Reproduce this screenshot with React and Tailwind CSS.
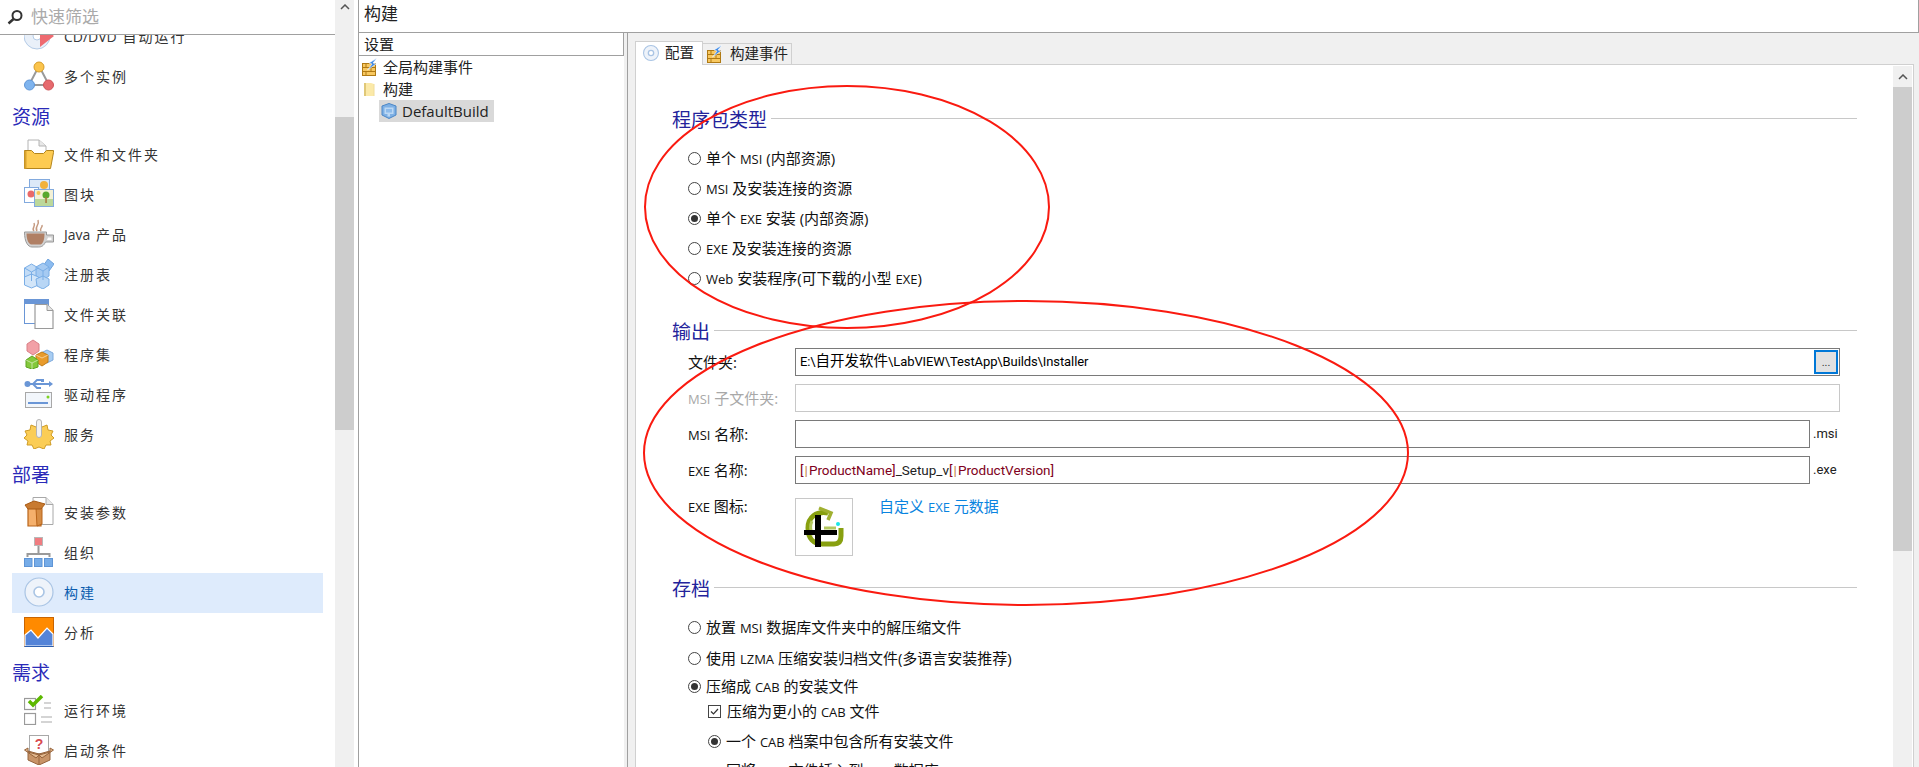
const font = { fontFamily: '"Open Sans","Noto Sans CJK SC",sans-serif' }

const Cd = ({ size = 30 }) => (
  <svg width={size} height={size} viewBox="0 0 30 30">
    <circle cx="15" cy="15" r="14" fill="#eef3fa" stroke="#a9c4e4" strokeWidth={size < 20 ? 2 : 1.2} />
    <circle cx="15" cy="15" r="5" fill="#fff" stroke="#a9c4e4" strokeWidth={size < 20 ? 2.500 : 1.6} />
  </svg>
)

const Bricks = () => (
  <svg width="16" height="18" viewBox="0 0 16 18" className="shrink-0">
    <rect x="0.500" y="5.500" width="13" height="12" fill="#f8c860" stroke="#b07a14" />
    <path d="M0 9.500h14M0 13.500h14M4 5v4.500M9 9.500v4M4 13.500v4M10 5v4.500" stroke="#b07a14" strokeWidth="1" />
    <path d="M15 0L7 5 10 6 5.500 12 14 6 11 5Z" fill="#3f8ae6" stroke="#fff" strokeWidth="0.600" />
  </svg>
)

const Folder = () => (
  <svg width="16" height="16" viewBox="0 0 16 16" className="shrink-0">
    <path d="M2 2h7l3 1v12H2z" fill="#fbe9a8" />
    <path d="M2 2h2v13H2z" fill="#e0c878" />
    <path d="M12 3v12" stroke="#efdc9c" />
  </svg>
)

const BlueCube = () => (
  <svg width="16" height="16" viewBox="0 0 16 16" className="shrink-0">
    <path d="M8 0.500L15 3v9l-7 3.500L1 12V3z" fill="#7eb0e4" stroke="#4b86c6" />
    <path d="M3.500 4.500h9v6.500H9v2.500H6.500V11h-3z" fill="#bcd8f4" />
    <path d="M5 6h6v3.500H5z" fill="#8dbbea" />
  </svg>
)

const ExeIcon = () => (
  <svg width="44" height="44" viewBox="0 0 44 44">
    <path d="M26 8C14 6 6 12 6 23c0 11 6 16 14 16h12c5 0 7-3 7-8v-8" fill="none" stroke="#88a010" strokeWidth="5" />
    <path d="M10 16c-2 4-2 10 1 14M22 23h12" fill="none" stroke="#b4c860" strokeWidth="3" />
    <path d="M17 3l12 5-3 7" fill="none" stroke="#a0b030" strokeWidth="3.500" />
    <path d="M13 10h6v32h-6zM2 25h33v5H2z" fill="#000" />
    <circle cx="36" cy="19" r="2" fill="#19e6e6" />
  </svg>
)

const Ic = {
  cdplay: (
    <svg width="30" height="30" viewBox="0 0 30 30">
      <circle cx="13" cy="15" r="13" fill="#e9f0f9" stroke="#b4cbe6" />
      <circle cx="13" cy="15" r="4" fill="#fff" stroke="#b4cbe6" />
      <path d="M16 4l14 11-14 11z" fill="#ee6a70" />
    </svg>
  ),
  instances: (
    <svg width="30" height="30" viewBox="0 0 30 30">
      <path d="M15 5L5 24h20z" fill="none" stroke="#9a9a9a" strokeWidth="2" />
      <circle cx="15" cy="6" r="5" fill="#fbc44c" stroke="#d69c28" />
      <circle cx="5.500" cy="24" r="5" fill="#7fb4ee" stroke="#5f95d6" />
      <circle cx="24.500" cy="24" r="5" fill="#e66a6e" stroke="#cf5357" />
    </svg>
  ),
  folder: (
    <svg width="30" height="30" viewBox="0 0 30 30">
      <path d="M4 1h11l7 6v12H4z" fill="#fff" stroke="#b4b4b4" />
      <path d="M15 1v6h7" fill="#e8e8e8" stroke="#b4b4b4" />
      <path d="M0.500 29.500V11.500h7l3 3h9l3-3h7v2l-3 16z" fill="#fdcb52" stroke="#b4851c" />
      <path d="M0.500 12v17.500h2V12z" fill="#d9a32e" />
    </svg>
  ),
  images: (
    <svg width="30" height="30" viewBox="0 0 30 30">
      <rect x="5.500" y="0.500" width="20" height="18" fill="#dce9f8" stroke="#82aade" />
      <rect x="0.500" y="8.500" width="14" height="15" fill="#fff" stroke="#82aade" />
      <circle cx="7" cy="15" r="3.500" fill="#e96a6a" />
      <circle cx="20" cy="6" r="4" fill="#f2b23c" />
      <rect x="10.500" y="10.500" width="19" height="17" fill="#f3f1d6" stroke="#82aade" />
      <rect x="11" y="20" width="18" height="7" fill="#bcd89a" />
      <circle cx="22" cy="16" r="3.500" fill="#58a82e" />
      <rect x="21.300" y="18" width="1.500" height="6" fill="#a8763a" />
      <circle cx="14.500" cy="14" r="2" fill="#f6c757" />
    </svg>
  ),
  java: (
    <svg width="30" height="30" viewBox="0 0 30 30">
      <path d="M10 12c-3-3 2-4 0-8M13 12c-3-4 3-6 1-11M17 12c-2-3 2-3 1-6" fill="none" stroke="#c59a80" strokeWidth="1.500" />
      <path d="M0.500 13h22v3h7v7h-8c-2 4-4 5-7 5H8c-4 0-7.500-5-7.500-15z" fill="#d2d2d2" stroke="#999" />
      <path d="M24 18.500h3.500v2.500H23z" fill="#fff" />
      <path d="M2.500 14.500h18c0 5-1 10-4 11H7c-3-1-4.500-6-4.500-11z" fill="#b07f64" />
    </svg>
  ),
  registry: (
    <svg width="30" height="30" viewBox="0 0 30 30">
      <path d="M24 0l6 5-5 7-6-5z" fill="#8cbcf0" stroke="#6fa3dc" />
      <path d="M0.500 9l7-4 7 4v9l-7 4-7-4z" fill="#c3dcf6" stroke="#7aaee6" />
      <path d="M12 8l7-4 6 4v9l-6 4-7-4z" fill="#a5caf2" stroke="#7aaee6" />
      <path d="M0.500 18l7-3 7 3v8l-7 3-7-3z" fill="#d3e6f9" stroke="#7aaee6" />
      <path d="M12 20l7-3 6 3v6l-6 4-6-3z" fill="#b8d6f5" stroke="#7aaee6" />
      <path d="M0.500 9l7 4v9M14.500 9l-7 4M12 8l7 4v9M25 8l-6 4" fill="none" stroke="#7aaee6" />
    </svg>
  ),
  assoc: (
    <svg width="30" height="30" viewBox="0 0 30 30">
      <rect x="0.500" y="0.500" width="24" height="24" fill="#fff" stroke="#6a96d6" />
      <rect x="0" y="0" width="25" height="5" fill="#6a96d6" />
      <path d="M11 5.500h12l6 6v18H11z" fill="#fff" stroke="#9a9a9a" strokeWidth="1.200" />
      <path d="M23 5.500v6h6" fill="#e6e6e6" stroke="#9a9a9a" />
    </svg>
  ),
  assembly: (
    <svg width="30" height="30" viewBox="0 0 30 30">
      <path d="M3 5l6-4 6 4v7l-6 4-6-4z" fill="#f2a0a6" stroke="#d98086" />
      <path d="M17 14l6-3 6 3v7l-6 3-6-3z" fill="#a8cdf2" stroke="#7eaadc" />
      <path d="M12 16l6-3 6 3v7l-6 4-6-4z" fill="#e89b2c" stroke="#c07c18" />
      <path d="M2 21l6-4 6 4v7l-6 2-6-2z" fill="#84c83c" stroke="#5ca420" />
      <path d="M2 21l6 3 6-3M8 24v6M12 16l6 3 6-3" fill="none" stroke="#fff" strokeOpacity=".5" />
    </svg>
  ),
  usb: (
    <svg width="30" height="30" viewBox="0 0 30 30">
      <path d="M3 5h23M9 5l4-4h5M9 5l4 4h4" fill="none" stroke="#6a96d6" strokeWidth="1.800" />
      <circle cx="3.500" cy="5" r="3" fill="#6a96d6" />
      <path d="M25 2l4 3-4 3z" fill="#6a96d6" />
      <rect x="17" y="0" width="3" height="3" fill="#6a96d6" />
      <rect x="1.500" y="13.500" width="26" height="15" fill="#f2f6fb" stroke="#a8a8a8" />
      <rect x="4" y="23" width="20" height="2" fill="#6a96d6" />
      <circle cx="24" cy="18" r="1.500" fill="#7ed321" />
    </svg>
  ),
  service: (
    <svg width="30" height="30" viewBox="0 0 30 30">
      <path d="M15 4l3 4 5-2 1 5 5 1-2 4 3 3-4 3 1 4-5 0-2 4-5-2-5 2-2-4-5 0 1-4-4-3 3-3-2-4 5-1 1-5 5 2z" fill="#fbcd56" stroke="#cf9c26" />
      <rect x="12.500" y="0.500" width="5" height="18" rx="2.500" fill="#f2f2f2" stroke="#b4b4b4" />
    </svg>
  ),
  params: (
    <svg width="30" height="30" viewBox="0 0 30 30">
      <path d="M9 0.500h13l7 7v20H9z" fill="#fff" stroke="#a8a8a8" />
      <path d="M22 0.500v7h7" fill="#e8e8e8" stroke="#a8a8a8" />
      <path d="M4 11h13v18H4z" fill="#f5b06c" stroke="#b8641a" strokeWidth="1.200" />
      <path d="M12 11h6v16l-5 2z" fill="#d68c44" stroke="#b8641a" />
      <path d="M1 8l9-4 11 3-4 5H4z" fill="#c87a30" stroke="#a85a14" />
    </svg>
  ),
  org: (
    <svg width="30" height="30" viewBox="0 0 30 30">
      <rect x="10.500" y="0.500" width="8" height="8" fill="#f07c80" stroke="#b8b8b8" />
      <path d="M14.500 9v8M3.500 20v-3h22v3" fill="none" stroke="#9a9a9a" strokeWidth="2" />
      <rect x="0.500" y="21.500" width="7.500" height="8" fill="#76ace8" stroke="#5f95d6" />
      <rect x="10.500" y="21.500" width="7.500" height="8" fill="#76ace8" stroke="#5f95d6" />
      <rect x="20.500" y="21.500" width="8" height="8" fill="#76ace8" stroke="#5f95d6" />
    </svg>
  ),
  disc: <Cd />,
  analysis: (
    <svg width="30" height="30" viewBox="0 0 30 30">
      <rect x="0.500" y="0.500" width="29" height="29" fill="#ff8a00" stroke="#c96400" />
      <path d="M1 18l6-5 7 8 9-10 6 6v12H1z" fill="#5484d8" stroke="#fff" strokeWidth="1.200" />
      <path d="M0.500 29.500h29" stroke="#2d5fb0" />
    </svg>
  ),
  runtime: (
    <svg width="30" height="30" viewBox="0 0 30 30">
      <rect x="0.500" y="3.500" width="11" height="11" fill="#fff" stroke="#9a9a9a" strokeWidth="1.200" />
      <rect x="0.500" y="18.500" width="11" height="11" fill="#fff" stroke="#9a9a9a" strokeWidth="1.200" />
      <path d="M5 6l4 4 9-9" fill="none" stroke="#5cb800" strokeWidth="3.500" />
      <path d="M20 8h7M20 13h7M17 22h11M17 27h11" stroke="#d4d4d4" strokeWidth="1.800" />
    </svg>
  ),
  launch: (
    <svg width="30" height="30" viewBox="0 0 30 30">
      <rect x="5.500" y="0.500" width="19" height="18" fill="#fff" stroke="#a8a8a8" />
      <text x="15" y="14" textAnchor="middle" fontSize="14" fontWeight="700" fill="#d84a50" style={{ fontFamily: '"Liberation Sans",sans-serif' }}>?</text>
      <path d="M4 16l11 3 11-3v9l-11 5-11-5z" fill="#c89468" stroke="#96643c" />
      <path d="M0.500 15L4 13v4l11 3-3 3zM29.500 15L26 13v4l-11 3 3 3z" fill="#e2b88e" stroke="#96643c" />
      <path d="M15 19v11" stroke="#96643c" />
    </svg>
  ),
}

const rows = [
  { icon: 'cdplay', text: <><span className="tracking-normal">CD/DVD</span> 自动运行</> },
  { icon: 'instances', text: '多个实例' },
  { head: '资源' },
  { icon: 'folder', text: '文件和文件夹' },
  { icon: 'images', text: '图块' },
  { icon: 'java', text: <><span className="tracking-normal">Java</span> 产品</> },
  { icon: 'registry', text: '注册表' },
  { icon: 'assoc', text: '文件关联' },
  { icon: 'assembly', text: '程序集' },
  { icon: 'usb', text: '驱动程序' },
  { icon: 'service', text: '服务' },
  { head: '部署' },
  { icon: 'params', text: '安装参数' },
  { icon: 'org', text: '组织' },
  { icon: 'disc', text: '构建', active: true },
  { icon: 'analysis', text: '分析' },
  { head: '需求' },
  { icon: 'runtime', text: '运行环境' },
  { icon: 'launch', text: '启动条件' },
]

const Latin = ({ children }) => <span className="text-[13px]">{children}</span>

const Radio = ({ checked, className = '' }) => (
  <span className={`w-[13px] h-[13px] rounded-full border border-[#444] bg-white shrink-0 flex items-center justify-center ${className}`}>
    {checked && <span className="w-[7px] h-[7px] rounded-full bg-[#333]" />}
  </span>
)

const Option = ({ checked, className = '', radioClass = '', children }) => (
  <div className={`h-[30px] flex items-center gap-[5px] text-[15px] text-[#111] whitespace-nowrap ${className}`}>
    <Radio checked={checked} className={radioClass} />
    <span>{children}</span>
  </div>
)

const Heading = ({ children, className = '' }) => (
  <div className={`h-6 flex items-center gap-[4px] ${className}`}>
    <span className="text-[19px] text-[#23239b] leading-6 pt-px whitespace-nowrap">{children}</span>
    <span className="flex-1 h-px bg-[#c8c8c8] -mt-[2px]" />
  </div>
)

const Field = ({ label, disabled, suffix, children }) => (
  <div className="flex items-center h-7">
    <div className={`w-[107px] shrink-0 text-[15px] whitespace-nowrap ${disabled ? 'text-[#a8a8a8]' : 'text-[#111]'}`}>{label}</div>
    <div className={`flex-1 h-7 flex items-center pl-[4px] relative text-[13.500px] whitespace-nowrap border [font-family:Roboto,'Noto_Sans_CJK_SC',sans-serif] ${disabled ? 'border-[#c8c8c8]' : 'border-[#7a7a7a]'}`}>
      {children}
    </div>
    {suffix && <div className="w-[30px] shrink-0 pl-[3px] text-[13px] text-[#222] [font-family:Roboto,sans-serif]">{suffix}</div>}
  </div>
)

const Token = ({ children }) => (
  <span className="text-[#800020]">[<span className="text-[#c07840] px-px">|</span>{children}]</span>
)

export default function App() {
  return (
    <div className="relative w-full h-screen flex overflow-hidden bg-white" style={font}>
      {/* left nav */}
      <div className="w-[335px] shrink-0 flex flex-col">
        <div className="h-[35px] shrink-0 border-b border-[#a0a0a0] bg-white relative z-10 flex items-center pl-[7px] gap-[8px]">
          <svg width="16" height="16" viewBox="0 0 16 16">
            <circle cx="10" cy="6.500" r="4.500" fill="none" stroke="#333" strokeWidth="2" />
            <path d="M6.500 10L1.500 14.500" stroke="#333" strokeWidth="2.500" />
          </svg>
          <span className="text-[17px] text-[#aaa]">快速筛选</span>
        </div>
        <div className="flex-1 overflow-hidden">
          <div className="-mt-[18px] pl-3 pr-[12px]">
            {rows.map((r) =>
              r.head ? (
                <div key={r.head} className="h-[38px] pt-[2px] flex items-center text-[19px] text-[#2a2ab8]">{r.head}</div>
              ) : (
                <div key={r.icon} className={`h-10 flex items-center pl-3 gap-[10px] ${r.active ? 'bg-[#deebfc] text-[#0a5cae]' : 'text-[#333]'}`}>
                  <span className="w-[30px] h-[30px] shrink-0 -mt-[2px]">{Ic[r.icon]}</span>
                  <span className="text-[14px] tracking-[2px] whitespace-nowrap pb-[2px]">{r.text}</span>
                </div>
              )
            )}
          </div>
        </div>
      </div>

      {/* nav scrollbar */}
      <div className="w-[19px] shrink-0 bg-[#f0f0f0] flex flex-col">
        <div className="h-[117px] flex justify-center pt-[4px]">
          <svg width="10" height="6" viewBox="0 0 10 6"><path d="M1 5l4-4 4 4" fill="none" stroke="#555" strokeWidth="1.500" /></svg>
        </div>
        <div className="h-[313px] bg-[#cdcdcd]" />
      </div>
      <div className="w-[4px] shrink-0" />

      {/* main */}
      <div className="flex-1 min-w-0 flex flex-col border-l border-[#a0a0a0]">
        <div className="h-[33px] shrink-0 bg-white border-b border-r border-[#a0a0a0] flex items-center pl-[5px] pb-[4px] text-[17px] text-[#222]">构建</div>
        <div className="flex-1 min-h-0 flex bg-[#f0f0f0]">
          {/* tree */}
          <div className="w-[265px] shrink-0 bg-white flex flex-col">
            <div className="h-[23px] shrink-0 border-b border-r border-[#a0a0a0] pl-[5px] flex items-center text-[15px] text-[#222]">设置</div>
            <div className="text-[15px] text-[#222]">
              <div className="h-[22px] flex items-center pl-[3px] gap-[5px]"><Bricks />全局构建事件</div>
              <div className="h-[22px] flex items-center pl-[3px] gap-[5px]"><Folder />构建</div>
              <div className="h-[22px] flex items-center ml-[20px] w-[115px] pl-[2px] gap-[5px] bg-[#d9d9d9]"><BlueCube />DefaultBuild</div>
            </div>
          </div>
          <div className="w-[3px] shrink-0" />

          {/* tabs panel */}
          <div className="flex-1 min-w-0 flex flex-col border-l border-[#a0a0a0] pl-[7px] pr-[5px] pt-[8px]">
            <div className="h-[24px] shrink-0 flex items-end relative z-10 -mb-px">
              <div className="w-[68px] h-[24px] bg-white border-t border-l border-r border-[#d0d0d0] flex items-center pl-[7px] pb-[2px] gap-[6px] text-[14.500px] text-[#222]">
                <Cd size={16} />配置
              </div>
              <div className="w-[89px] h-[22px] bg-[#f0f0f0] border-t border-r border-b border-[#d0d0d0] flex items-center pl-[4px] gap-[7px] text-[14.500px] text-[#222]">
                <Bricks />构建事件
              </div>
            </div>
            <div className="flex-1 min-h-0 flex bg-white border-l border-t border-r border-[#d0d0d0] pt-px pr-[1px]">
              <div className="flex-1 min-w-0 overflow-hidden pl-[36px] pr-[36px] pt-[41px]">
                <Heading>程序包类型</Heading>
                <div className="mt-3 pl-[16px]">
                  <Option>单个 <Latin>MSI</Latin> (内部资源)</Option>
                  <Option>
                    <Latin>MSI</Latin> 及安装连接的资源
                  </Option>
                  <Option checked>单个 <Latin>EXE</Latin> 安装 (内部资源)</Option>
                  <Option>
                    <Latin>EXE</Latin> 及安装连接的资源
                  </Option>
                  <Option>
                    <Latin>Web</Latin> 安装程序(可下载的小型 <Latin>EXE</Latin>)
                  </Option>
                </div>

                <Heading className="mt-[26px]">输出</Heading>
                <div className="mt-[5px] pl-[16px] pr-[17px] flex flex-col gap-2">
                  <Field label="文件夹:">
                    <span className="text-[13px] tracking-[-0.100px]">E:\<span className="text-[14.500px] tracking-normal">自开发软件</span>\LabVIEW\TestApp\Builds\Installer</span>
                    <button className="absolute right-px top-px w-[24px] h-[24px] bg-[#e1e1e1] border-2 border-[#0078d7] text-[11px] leading-none text-[#333]">...</button>
                  </Field>
                  <Field label={<><Latin>MSI</Latin> 子文件夹:</>} disabled />
                  <Field label={<><Latin>MSI</Latin> 名称:</>} suffix=".msi" />
                  <Field label={<><Latin>EXE</Latin> 名称:</>} suffix=".exe">
                    <Token>ProductName</Token>
                    <span className="text-[#222]">_Setup_v</span>
                    <Token>ProductVersion</Token>
                  </Field>
                </div>
                <div className="mt-[14px] pl-[16px] flex items-start">
                  <div className="w-[107px] shrink-0 h-4 text-[15px] leading-4 text-[#111]"><Latin>EXE</Latin> 图标:</div>
                  <div className="w-[58px] h-[58px] border border-[#c8c8c8] flex items-center justify-center"><ExeIcon /></div>
                  <div className="ml-[26px] h-4 text-[15px] leading-4 text-[#0a84e0]">自定义 <Latin>EXE</Latin> 元数据</div>
                </div>

                <Heading className="mt-5">存档</Heading>
                <div className="mt-3 pl-[16px]">
                  <Option>放置 <Latin>MSI</Latin> 数据库文件夹中的解压缩文件</Option>
                  <Option className="mt-px">使用 <Latin>LZMA</Latin> 压缩安装归档文件(多语言安装推荐)</Option>
                  <Option checked className="!h-[26px]">压缩成 <Latin>CAB</Latin> 的安装文件</Option>
                  <div className="h-[25px] pl-[20px] flex items-center gap-[6px] text-[15px] text-[#111]">
                    <span className="w-[13px] h-[13px] border border-[#444] flex items-center justify-center">
                      <svg width="11" height="11" viewBox="0 0 11 11"><path d="M2 5.500l2.500 2.500L9 3" fill="none" stroke="#333" strokeWidth="1.200" /></svg>
                    </span>
                    <span>压缩为更小的 <Latin>CAB</Latin> 文件</span>
                  </div>
                  <Option checked className="mt-[2px] pl-[20px]">一个 <Latin>CAB</Latin> 档案中包含所有安装文件</Option>
                  <Option className="-mt-px pl-[20px]" radioClass="mt-[6px]">同将 <Latin>CAB</Latin> 文件插入到 <Latin>MSI</Latin> 数据库</Option>
                </div>
              </div>

              {/* content scrollbar */}
              <div className="w-[19px] shrink-0 bg-[#f0f0f0] flex flex-col">
                <div className="h-[21px] flex items-center justify-center">
                  <svg width="10" height="6" viewBox="0 0 10 6"><path d="M1 5l4-4 4 4" fill="none" stroke="#555" strokeWidth="1.500" /></svg>
                </div>
                <div className="h-[464px] bg-[#cdcdcd]" />
              </div>
            </div>
          </div>
        </div>
      </div>

      {/* red annotation ellipses drawn over the window */}
      <svg className="absolute left-0 top-0 pointer-events-none" width="1919" height="767" viewBox="0 0 1919 767">
        <ellipse cx="847" cy="207" rx="202" ry="121" fill="none" stroke="#fa1a10" strokeWidth="2" />
        <ellipse cx="1026" cy="453" rx="382" ry="152" fill="none" stroke="#fa1a10" strokeWidth="2" />
      </svg>
    </div>
  )
}
